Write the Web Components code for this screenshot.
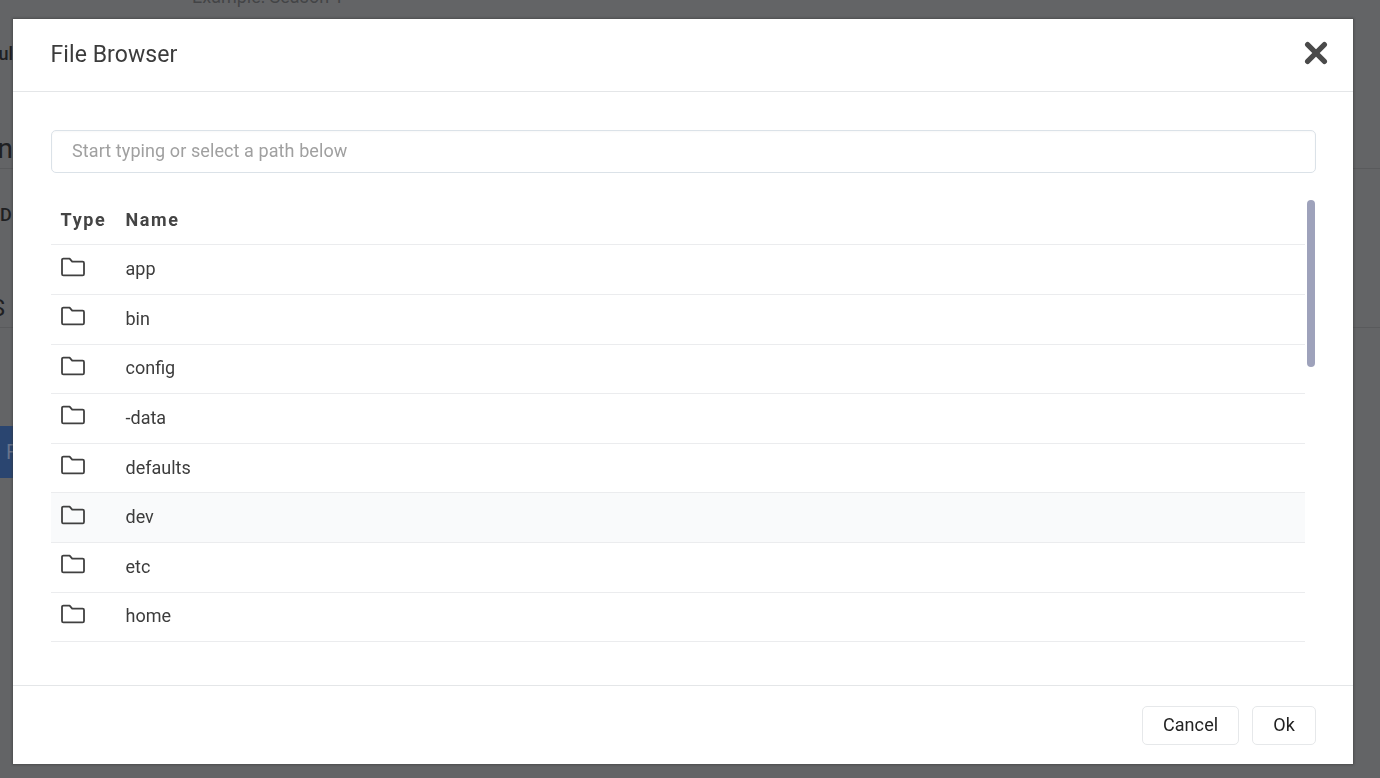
<!DOCTYPE html>
<html>
<head>
<meta charset="utf-8">
<title>File Browser</title>
<style>
  html, body { margin: 0; height: 100%; overflow: hidden; background: #636466; }
  body { font-family: Roboto, "Liberation Sans", sans-serif; }
</style>
</head>
<body>
<backdrop-page></backdrop-page>
<modal-dialog heading="File Browser">
  <path-input placeholder="Start typing or select a path below"></path-input>
  <file-table>
    <file-row name="app"></file-row>
    <file-row name="bin"></file-row>
    <file-row name="config"></file-row>
    <file-row name="-data"></file-row>
    <file-row name="defaults"></file-row>
    <file-row name="dev" hover></file-row>
    <file-row name="etc"></file-row>
    <file-row name="home"></file-row>
  </file-table>
  <dialog-button slot="footer">Cancel</dialog-button>
  <dialog-button slot="footer">Ok</dialog-button>
</modal-dialog>

<script>
class BackdropPage extends HTMLElement {
  constructor() {
    super();
    const shadowRoot = this.attachShadow({ mode: "open" });
    shadowRoot.innerHTML = `
      <style>
        :host {
          display: block;
          height: 778px;
          overflow: hidden;
          color: #1f2022;
          font-family: Roboto, "Liberation Sans", sans-serif;
        }
        .hint {
          color: #434446;
          font-size: 18px;
          line-height: 20px;
          margin-top: -13px;
          padding-left: 192px;
        }
        .edge {
          font-weight: 500;
          width: 13px;
          overflow: hidden;
          white-space: nowrap;
          display: flex;
          justify-content: flex-end;
        }
        .ul { font-size: 18px; line-height: 22px; margin-top: 36px; }
        .n { font-size: 28px; font-weight: 400; line-height: 32px; margin-top: 68px; }
        .rule { border-top: 1px solid #595a5c; }
        .d { font-size: 18px; line-height: 22px; margin-top: 35px; justify-content: flex-start; }
        .s { font-size: 24px; font-weight: 400; line-height: 28px; margin-top: 68px; width: 5px; }
        .btn {
          width: 13px;
          height: 52px;
          margin-top: 98px;
          background: #2a4570;
          color: #67748c;
          font-size: 20px;
          line-height: 52px;
          overflow: hidden;
          padding-left: 6px;
          box-sizing: border-box;
        }
      </style>
      <div class="hint">Example: Season 1</div>
      <div class="edge ul">ul</div>
      <div class="edge n">n</div>
      <div class="rule" style="margin-top:3px"></div>
      <div class="edge d">D</div>
      <div class="edge s">S</div>
      <div class="rule" style="margin-top:5px"></div>
      <div class="btn">F</div>
    `;
  }
}

class ModalDialog extends HTMLElement {
  constructor() {
    super();
    const shadowRoot = this.attachShadow({ mode: "open" });
    shadowRoot.innerHTML = `
      <style>
        :host {
          position: fixed;
          left: 13px;
          top: 19px;
          width: 1340px;
          height: 745px;
          display: flex;
          flex-direction: column;
          background: #fff;
          box-shadow: 0 0 2px 1px rgba(50,50,50,.45);
          color: #3c3c3c;
          font-family: Roboto, "Liberation Sans", sans-serif;
        }
        header {
          flex: none;
          display: flex;
          align-items: center;
          justify-content: space-between;
          padding: 0 25px 2px 37.5px;
          border-bottom: 1px solid #e4e6e8;
          height: 70px;
        }
        h2 { margin: 2px 0 0; font-size: 23px; letter-spacing: .08px; font-weight: 400; line-height: 30px; }
        svg { display: block; margin-bottom: 2px; }
        main {
          flex: 1;
          min-height: 0;
          padding: 38px 37px 0 38px;
          position: relative;
        }
        footer {
          flex: none;
          height: 79px;
          border-top: 1px solid #e4e6e8;
          display: flex;
          justify-content: flex-end;
          align-items: flex-start;
          gap: 13px;
          padding: 20px 37px 0 0;
          box-sizing: border-box;
        }
      </style>
      <header>
        <h2></h2>
        <svg width="24" height="24" viewBox="0 0 24 24" aria-hidden="true">
          <path d="M3.6 3.6 L20.4 20.4 M20.4 3.6 L3.6 20.4" stroke="#4a4a4a" stroke-width="5.2" stroke-linecap="round"/>
        </svg>
      </header>
      <main><slot></slot></main>
      <footer><slot name="footer"></slot></footer>
    `;
  }

  connectedCallback() {
    this.shadowRoot.querySelector("h2").textContent = this.getAttribute("heading");
  }
}

class PathInput extends HTMLElement {
  constructor() {
    super();
    const shadowRoot = this.attachShadow({ mode: "open" });
    shadowRoot.innerHTML = `
      <style>
        :host { display: block; }
        input {
          display: block;
          width: 100%;
          height: 43px;
          box-sizing: border-box;
          border: 1px solid #dbe2e8;
          border-radius: 5px;
          padding: 0 20px 3px;
          font: 18px Roboto, "Liberation Sans", sans-serif;
          letter-spacing: .09px;
          color: #363636;
          background: #fff;
          box-shadow: inset 0 1px 2px rgba(10,10,10,.03);
          outline: none;
        }
        input::placeholder { color: #a0a0a0; opacity: 1; }
      </style>
      <input type="text">
    `;
  }

  connectedCallback() {
    this.shadowRoot.querySelector("input").placeholder = this.getAttribute("placeholder");
  }
}

class FileTable extends HTMLElement {
  constructor() {
    super();
    const shadowRoot = this.attachShadow({ mode: "open" });
    shadowRoot.innerHTML = `
      <style>
        :host {
          display: block;
          margin-top: 22px;
          padding-right: 11px;
          position: relative;
        }
        .head {
          height: 50.4px;
          display: grid;
          grid-template-columns: 74.5px 1fr;
          align-items: center;
          border-bottom: 1px solid #ebecee;
          font-size: 18px;
          font-weight: 700;
          letter-spacing: 1.6px;
          color: #444;
          box-sizing: border-box;
        }
        .head span { padding-bottom: 1px; }
        .head span:first-child { padding-left: 9.6px; }
        .thumb {
          position: absolute;
          right: 1px;
          top: 5px;
          width: 8px;
          height: 167px;
          border-radius: 4px;
          background: #9ea2bb;
        }
      </style>
      <div class="head"><span>Type</span><span>Name</span></div>
      <slot></slot>
      <div class="thumb"></div>
    `;
  }
}

class FileRow extends HTMLElement {
  constructor() {
    super();
    const shadowRoot = this.attachShadow({ mode: "open" });
    shadowRoot.innerHTML = `
      <style>
        :host {
          display: grid;
          grid-template-columns: 74.5px 1fr;
          align-items: center;
          height: 49.6px;
          box-sizing: border-box;
          border-bottom: 1px solid #ebecee;
          font-size: 18px;
          color: #3c3c3c;
        }
        :host([hover]) { background: #f9fafb; }
        svg { display: block; margin: 0 0 6px 10px; }
        span { padding-bottom: 2px; }
      </style>
      <svg width="24" height="20" viewBox="0 0 24 20" aria-hidden="true">
        <path d="M2.4 1.6 H8.6 L11.2 4.6 H21.6 A1.4 1.4 0 0 1 23 6 V17 A1.4 1.4 0 0 1 21.6 18.4 H2.4 A1.4 1.4 0 0 1 1 17 V3 A1.4 1.4 0 0 1 2.4 1.6 Z" fill="none" stroke="#404040" stroke-width="1.8" stroke-linejoin="round"/>
      </svg>
      <span></span>
    `;
  }

  connectedCallback() {
    this.shadowRoot.querySelector("span").textContent = this.getAttribute("name");
  }
}

class DialogButton extends HTMLElement {
  constructor() {
    super();
    const shadowRoot = this.attachShadow({ mode: "open" });
    shadowRoot.innerHTML = `
      <style>
        :host {
          display: block;
        }
        button {
          height: 39px;
          padding: 0 20px 2px;
          border: 1px solid #e6e8ea;
          border-radius: 5px;
          background: #fff;
          color: #222;
          font: 18px Roboto, "Liberation Sans", sans-serif;
          letter-spacing: .1px;
        }
      </style>
      <button type="button"><slot></slot></button>
    `;
  }
}

window.customElements.define("backdrop-page", BackdropPage);
window.customElements.define("modal-dialog", ModalDialog);
window.customElements.define("path-input", PathInput);
window.customElements.define("file-table", FileTable);
window.customElements.define("file-row", FileRow);
window.customElements.define("dialog-button", DialogButton);
</script>
</body>
</html>
